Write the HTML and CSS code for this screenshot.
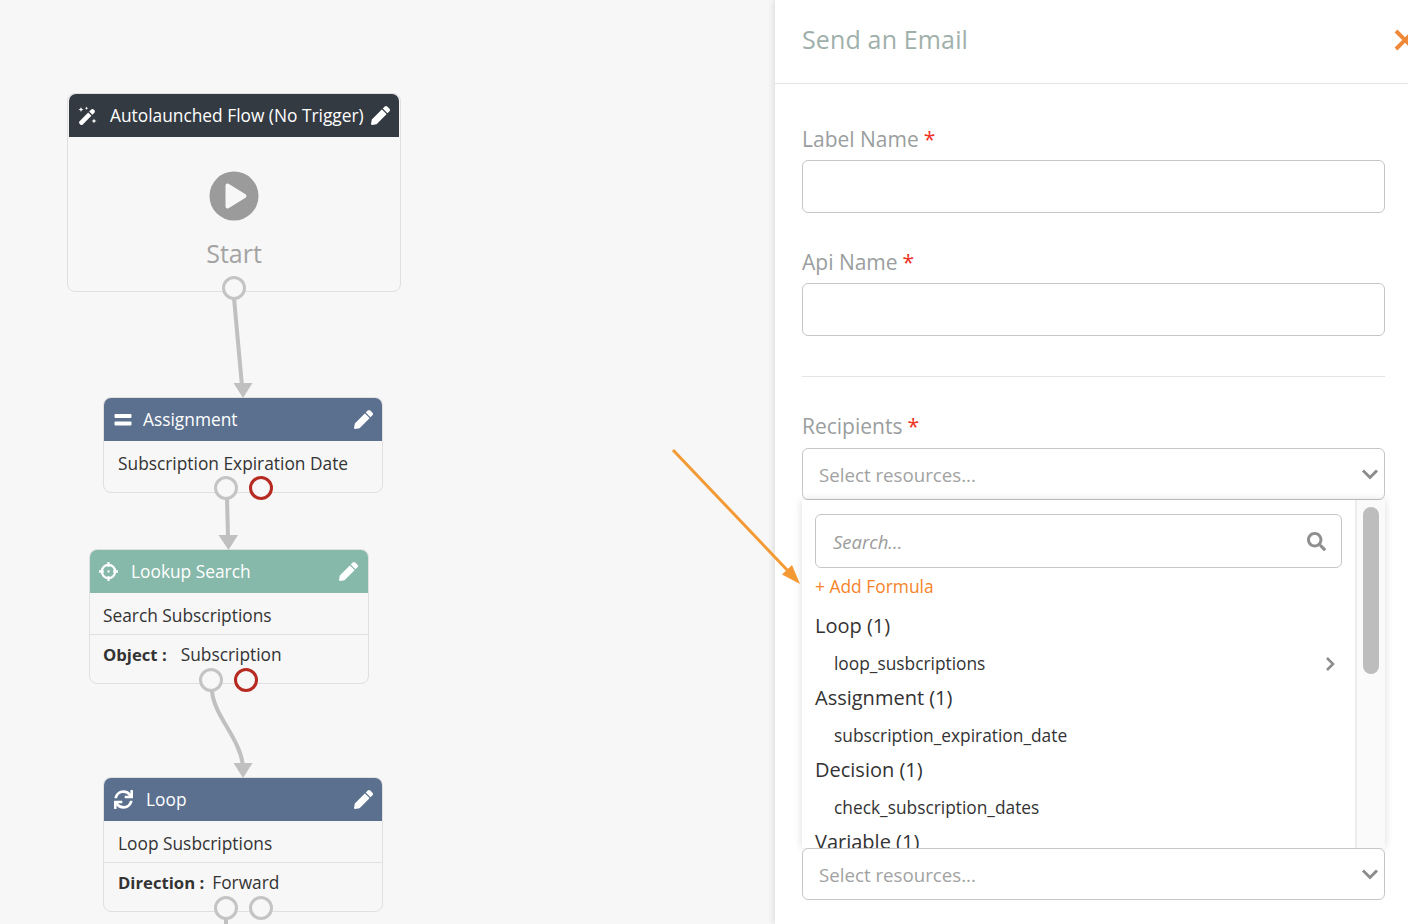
FILE: index.html
```html
<!DOCTYPE html>
<html lang="en">
<head>
<meta charset="utf-8">
<title>Send an Email</title>
<link rel="stylesheet" href="styles.css">
</head>
<body>
<svg class="defs" width="0" height="0" aria-hidden="true">
  <symbol id="i-pencil" viewBox="0 0 512 512"><path d="M497.9 142.1l-46.1 46.1c-4.7 4.7-12.3 4.7-17 0l-111-111c-4.7-4.7-4.7-12.3 0-17l46.1-46.1c18.7-18.7 49.1-18.7 67.9 0l60.1 60.1c18.8 18.7 18.8 49.1 0 67.9zM284.2 99.8L21.6 362.4.4 483.9c-2.9 16.4 11.4 30.6 27.8 27.8l121.5-21.3 262.6-262.6c4.7-4.7 4.7-12.3 0-17l-111-111c-4.8-4.7-12.4-4.7-17.1 0z"/></symbol>
  <symbol id="i-chev" viewBox="0 0 18 12"><path d="M2 2.500l7 7 7-7" fill="none" stroke="currentColor" stroke-width="3"/></symbol>
</svg>
<main class="canvas">
  <section class="node node-start">
    <header class="node-head head-dark">
      <svg class="ico ico-wand" viewBox="0 0 20 20"><path d="M13.200 3.600c.7-.7 1.800-.7 2.500 0l.7.700c.7.700.7 1.800 0 2.500l-2 2-3.200-3.200zM10.200 6.600l3.200 3.200-8.600 8.600c-.7.700-1.800.7-2.500 0l-.7-.7c-.7-.7-.7-1.800 0-2.500z"/><path d="M3 1l.7 1.800 1.800.7-1.800.7L3 6l-.7-1.800L.5 3.500l1.800-.7zM8.500.5l.5 1.200 1.200.5-1.200.5-.5 1.200-.5-1.200-1.200-.5 1.200-.5zM16 12.500l.7 1.800 1.800.7-1.800.7-.7 1.800-.7-1.800-1.800-.7 1.800-.7z"/></svg>
      <span class="node-title">Autolaunched Flow (No Trigger)</span>
      <svg class="ico-edit"><use href="#i-pencil"/></svg>
    </header>
    <div class="start-body">
      <svg class="play" viewBox="0 0 50 50"><circle cx="25" cy="25" r="24.500"/><path class="play-tri" d="M16.500 14.500c0-1.600 1.700-2.500 3-1.700l17 10.500c1.300.8 1.300 2.600 0 3.400l-17 10.500c-1.300.8-3-.1-3-1.700z"/></svg>
      <div class="start-label">Start</div>
    </div>
  </section>

  <section class="node node-assign">
    <header class="node-head head-blue">
      <svg class="ico ico-eq" viewBox="0 0 18 14"><rect x="0.500" y="1" width="17" height="4" rx="1"/><rect x="0.500" y="8.500" width="17" height="4" rx="1"/></svg>
      <span class="node-title">Assignment</span>
      <svg class="ico-edit"><use href="#i-pencil"/></svg>
    </header>
    <div class="node-row">Subscription Expiration Date</div>
  </section>

  <section class="node node-lookup">
    <header class="node-head head-green">
      <svg class="ico ico-target" viewBox="0 0 20 20"><circle cx="10" cy="10" r="7" fill="none" stroke="#fff" stroke-width="2.400"/><path d="M10 0v5M10 15v5M0 10h5M15 10h5" stroke="#fff" stroke-width="2.400"/><circle cx="10" cy="10" r="1.200"/></svg>
      <span class="node-title">Lookup Search</span>
      <svg class="ico-edit"><use href="#i-pencil"/></svg>
    </header>
    <div class="node-row row-line">Search Subscriptions</div>
    <div class="node-row"><b>Object :</b><span class="val val-wide">Subscription</span></div>
  </section>

  <section class="node node-loop">
    <header class="node-head head-blue">
      <svg class="ico ico-sync" viewBox="0 0 512 512"><path d="M440.65 12.57l4 82.77A247.16 247.16 0 0 0 255.83 8C134.73 8 33.91 94.92 12.29 209.82A12 12 0 0 0 24.09 224h49.05a12 12 0 0 0 11.67-9.26 175.91 175.91 0 0 1 317-56.94l-101.46-4.86a12 12 0 0 0-12.57 12v47.41a12 12 0 0 0 12 12H500a12 12 0 0 0 12-12V12a12 12 0 0 0-12-12h-47.37a12 12 0 0 0-11.98 12.57zM255.83 432a175.61 175.61 0 0 1-146-77.8l101.8 4.87a12 12 0 0 0 12.57-12v-47.4a12 12 0 0 0-12-12H12a12 12 0 0 0-12 12V500a12 12 0 0 0 12 12h47.35a12 12 0 0 0 12-12.6l-4.15-82.57A247.17 247.17 0 0 0 255.83 504c121.11 0 221.93-86.92 243.55-201.82a12 12 0 0 0-11.8-14.18h-49.05a12 12 0 0 0-11.67 9.26A175.86 175.86 0 0 1 255.83 432z"/></svg>
      <span class="node-title">Loop</span>
      <svg class="ico-edit"><use href="#i-pencil"/></svg>
    </header>
    <div class="node-row row-line">Loop Susbcriptions</div>
    <div class="node-row"><b>Direction :</b><span class="val">Forward</span></div>
  </section>

  <svg class="wires" width="775" height="924" viewBox="0 0 775 924">
    <g class="wire">
      <path d="M234 298L242 386"/>
      <path d="M227 498L228 537"/>
      <path d="M212 691C214 716 240 738 243 766"/>
      <path d="M226 918V924"/>
    </g>
    <g class="tip">
      <path d="M233.500 383H252.500L243 398z"/>
      <path d="M218.500 535H238L228.500 550z"/>
      <path d="M233.500 763H252.500L243 778z"/>
    </g>
    <g class="port">
      <circle cx="234" cy="288" r="10.500"/>
      <circle cx="226" cy="488" r="10.500"/>
      <circle cx="211" cy="680" r="10.500"/>
      <circle cx="226" cy="908" r="10.500"/>
      <circle cx="261" cy="908" r="10.500"/>
    </g>
    <g class="port port-red">
      <circle cx="261" cy="488" r="10.500"/>
      <circle cx="246" cy="680" r="10.500"/>
    </g>
  </svg>
</main>

<aside class="panel">
  <header class="panel-head">
    <h1 class="panel-title">Send an Email</h1>
    <svg class="close" viewBox="0 0 16 16"><path d="M2 2l12 12M14 2L2 14"/></svg>
  </header>
  <form class="form">
    <div class="field">
      <label class="label">Label Name<span class="req">*</span></label>
      <div class="box"></div>
    </div>
    <div class="field">
      <label class="label">Api Name<span class="req">*</span></label>
      <div class="box"></div>
    </div>
    <hr class="rule">
    <div class="field-recip">
      <label class="label">Recipients<span class="req">*</span></label>
      <div class="box box-select"><span>Select resources...</span><svg class="chev"><use href="#i-chev"/></svg></div>
      <div class="dropdown">
        <div class="dd-main">
          <div class="search"><span>Search...</span>
            <svg class="search-ico" viewBox="0 0 512 512"><path d="M505 442.7L405.3 343c-4.500-4.500-10.600-7-17-7H372c27.600-35.300 44-79.700 44-128C416 93.100 322.900 0 208 0S0 93.100 0 208s93.100 208 208 208c48.300 0 92.700-16.400 128-44v16.300c0 6.400 2.500 12.500 7 17l99.700 99.700c9.400 9.400 24.600 9.400 33.900 0l28.300-28.300c9.400-9.400 9.400-24.600.1-34zM208 336c-70.700 0-128-57.200-128-128 0-70.700 57.200-128 128-128 70.700 0 128 57.200 128 128 0 70.700-57.200 128-128 128z"/></svg>
          </div>
          <div class="add">+ Add Formula</div>
          <div class="group">Loop (1)</div>
          <div class="item">loop_susbcriptions<svg class="more" viewBox="0 0 10 16"><path d="M2 2l6 6-6 6"/></svg></div>
          <div class="group">Assignment (1)</div>
          <div class="item">subscription_expiration_date</div>
          <div class="group">Decision (1)</div>
          <div class="item">check_subscription_dates</div>
          <div class="group">Variable (1)</div>
        </div>
        <div class="dd-scroll"><div class="thumb"></div></div>
      </div>
      <div class="box box-select"><span>Select resources...</span><svg class="chev"><use href="#i-chev"/></svg></div>
    </div>
  </form>
</aside>

<svg class="arrow" width="140" height="150" viewBox="0 0 140 150"><path class="arrow-line" d="M1 1L118 124"/><path class="arrow-tip" d="M128 135L110 125.500 120 116z"/></svg>
</body>
</html>
```
FILE: styles.css
```css
* { box-sizing: border-box; }
html, body { height: 100%; }
body {
  margin: 0;
  display: flex;
  height: 924px;
  overflow: hidden;
  background: #f7f7f7;
  font-family: "Open Sans", "Noto Sans", sans-serif;
  color: #333;
}
.defs { position: absolute; }
.canvas { position: relative; flex: 0 0 775px; height: 924px; }

.node {
  position: absolute;
  background: #f7f7f7;
  border: 1px solid #e0e0e0;
  border-radius: 8px;
  font-size: 17.330px;
  line-height: 24px;
}
.node-start { left: 67px; top: 93px; width: 334px; height: 199px; }
.node-assign { left: 103px; top: 397px; width: 280px; height: 96px; }
.node-lookup { left: 89px; top: 549px; width: 280px; height: 135px; }
.node-loop { left: 103px; top: 777px; width: 280px; height: 135px; }
.node-start .node-head { margin: 0 1px; }

.node-head {
  display: flex;
  align-items: center;
  height: 43px;
  padding: 0 9px 0 10px;
  border-radius: 7px 7px 0 0;
  color: #fff;
  fill: #fff;
}
.node-lookup .node-head { padding: 0 10px 0 9px; }
.node-start .node-head { padding: 0 9px; }
.head-dark { background: #343a42; }
.head-blue { background: #5b708f; }
.head-green { background: #87b9aa; }
.node-title { flex: 1; font-size: 17.330px; margin-top: -2px; }
.ico { flex: none; }
.ico-wand { width: 20px; height: 20px; margin-right: 12px; }
.ico-eq { width: 18px; height: 14px; margin-right: 11px; }
.ico-target { width: 19px; height: 19px; margin-right: 13px; }
.ico-sync { width: 19px; height: 19px; margin-right: 13px; }
.ico-edit { flex: none; width: 19px; height: 19px; }

.start-body { display: flex; flex-direction: column; align-items: center; padding-top: 34px; }
.play { width: 50px; height: 50px; fill: #9b9b9b; }
.play-tri { fill: #f7f7f7; }
.start-label { margin-top: 14px; font-size: 25px; line-height: 36px; color: #a3a3a3; }

.node-row { height: 39px; padding: 10px 14px 0; color: #333; white-space: nowrap; }
.node-lookup .node-row { padding-left: 13px; padding-right: 13px; }
.node .row-line { height: 42px; border-bottom: 1px solid #e0e0e0; padding-top: 10px; }
.node .row-line + .node-row { padding-top: 7px; }
.node-row b { font-size: 16.700px; font-weight: 700; }
.val { margin-left: 8px; }
.val-wide { margin-left: 14px; }

.wires { position: absolute; left: 0; top: 0; pointer-events: none; }
.wire path { fill: none; stroke: #c0c0c0; stroke-width: 4; }
.tip path { fill: #c0c0c0; }
.port circle { fill: #f7f7f7; stroke: #c4c4c4; stroke-width: 3; }
.port-red circle { stroke: #b72a22; }

.panel {
  flex: 0 0 633px;
  height: 924px;
  background: #fff;
  box-shadow: -2px 0 6px rgba(0,0,0,.1);
  overflow: hidden;
  position: relative;
}
.panel-head {
  display: flex;
  align-items: center;
  justify-content: space-between;
  height: 84px;
  padding: 0 0 6px 27px;
  border-bottom: 1px solid #e4e4e4;
}
.panel-title { margin: 0; font-size: 25px; font-weight: 400; line-height: 34px; color: #9fb0ab; letter-spacing: .15px; }
.close { flex: none; width: 24px; height: 24px; margin-right: -9px; margin-top: 3px; }
.close path { fill: none; stroke: #f0883a; stroke-width: 2.600; }

.form { padding: 40px 23px 0 27px; }
.field { margin-bottom: 33px; height: 90px; }
.field + .field { margin-bottom: 0; }
.label { display: block; height: 36px; padding-top: 1px; font-size: 21px; line-height: 29px; color: #9a9e9e; }
.req { margin-left: 5px; color: #ee3124; }
.box {
  height: 53px;
  border: 1px solid #c6c6c6;
  border-radius: 6px;
  background: #fff;
}
.box-select {
  display: flex;
  align-items: center;
  justify-content: space-between;
  padding: 0 5px 0 16px;
  font-size: 18.700px;
  color: #a2a2a2;
}
.chev { width: 18px; height: 12px; color: #8c8c8c; }
.rule { margin: 39px 0 0; border: 0; border-top: 1px solid #e4e4e4; }
.field-recip { padding-top: 34px; }
.field-recip .label { height: 37px; }
.field-recip .box { height: 52px; }

.dropdown {
  display: flex;
  height: 348px;
  box-shadow: 0 0 8px rgba(0,0,0,.14);
  overflow: hidden;
}
.dd-main { flex: 1; min-width: 0; padding: 14px 13px 0; border-right: 2px solid #ececec; }
.search {
  display: flex;
  align-items: center;
  justify-content: space-between;
  height: 54px;
  padding: 0 15px 0 17px;
  border: 1px solid #c6c6c6;
  border-radius: 6px;
  font-size: 18.500px;
  font-style: italic;
  color: #9c9c9c;
}
.search-ico { width: 19px; height: 19px; fill: #8f8f8f; }
.add { height: 38px; padding-top: 5px; font-size: 17.400px; line-height: 26px; color: #f5842a; }
.group { height: 36px; font-size: 20px; line-height: 34px; color: #333; }
.add + .group { margin-top: 3px; }
.item {
  display: flex;
  align-items: center;
  justify-content: space-between;
  height: 36px;
  padding: 0 7px 1px 19px;
  font-size: 17.330px;
  color: #333;
}
.more { width: 10px; height: 16px; margin-top: 2px; }
.more path { fill: none; stroke: #8c8c8c; stroke-width: 2.500; }
.dd-scroll { flex: 0 0 28px; padding: 7px 6px 0 6px; background: #fafafa; }
.thumb { height: 167px; border-radius: 8px; background: #bdbdbd; }

.arrow { position: absolute; left: 672px; top: 449px; overflow: visible; }
.arrow-line { fill: none; stroke: #f39a35; stroke-width: 3; }
.arrow-tip { fill: #f39a35; }
```
